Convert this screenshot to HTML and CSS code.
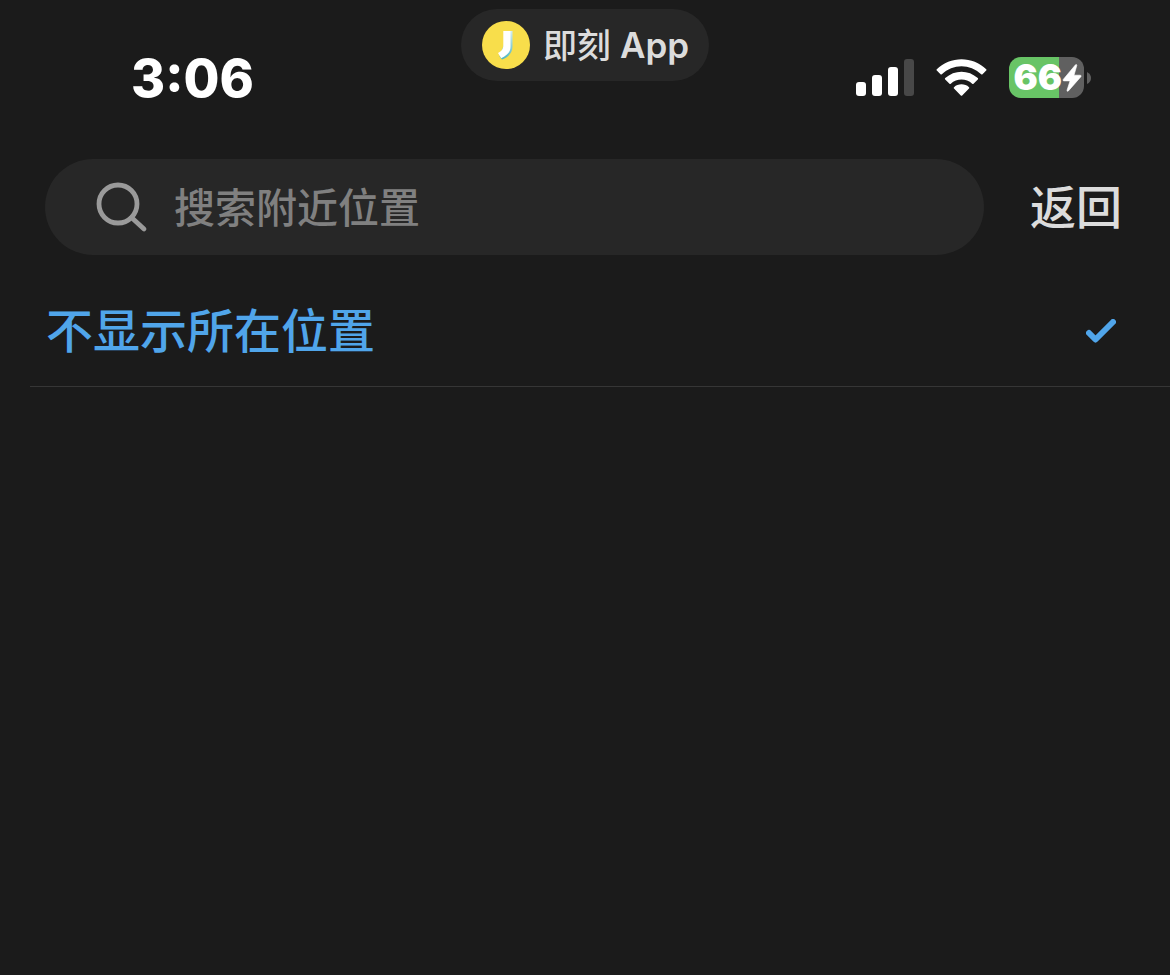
FILE: index.html
```html
<!DOCTYPE html>
<html lang="zh-CN">
<head>
<meta charset="utf-8">
<meta name="viewport" content="width=device-width, initial-scale=1">
<title>搜索附近位置</title>
<link rel="stylesheet" href="styles.css">
</head>
<body>
<header class="status">
  <time class="clock">3:06</time>
  <div class="pill">
    <svg class="pill-logo" viewBox="0 0 48 48" aria-hidden="true">
      <defs>
        <linearGradient id="shade" x1="0" y1="0" x2="0" y2="1">
          <stop offset="0" stop-color="#d3eef0"/>
          <stop offset="1" stop-color="#4fb5c4"/>
        </linearGradient>
      </defs>
      <circle cx="24" cy="24" r="24" fill="#f8de4b"/>
      <path d="M27 10h3.500v15.500c0 6-4 10.500-10.500 13l-2.500-3z" fill="url(#shade)"/>
      <path d="M21.300 10h7.200v16c0 5-3.500 8.500-9.300 11.200l-3.200-5.200c3.800-2 5.300-4 5.300-7.500z" fill="#fff"/>
    </svg>
    <span class="pill-text">即刻 <span class="latin">App</span></span>
  </div>
  <div class="indicators">
    <svg class="signal" viewBox="0 0 58 38" role="img" aria-label="信号">
      <g fill="#fff">
        <rect x="0" y="23" width="10" height="14" rx="3"/>
        <rect x="16" y="16" width="10" height="21" rx="3"/>
        <rect x="32" y="8" width="10" height="29" rx="3"/>
      </g>
      <rect x="48" y="0" width="10" height="37" rx="3" fill="#484848"/>
    </svg>
    <svg class="wifi" viewBox="0 0 51 38" role="img" aria-label="无线网络">
      <g fill="#fff">
        <path d="M.8 10.300C14-3.200 37-3.200 50.200 10.300q.6.700 0 1.300l-3.700 3.700q-.6.600-1.300 0C34 4.600 17 4.600 5.800 15.300q-.7.600-1.300 0L.8 11.600q-.6-.6 0-1.300z"/>
        <path d="M9.200 19.100C18.500 10.500 32.500 10.500 41.800 19.100q.7.600 0 1.300l-4.300 4.300q-.6.600-1.300 0C30.200 19.200 20.800 19.200 14.800 24.700q-.7.600-1.300 0L9.200 20.400q-.7-.7 0-1.300z"/>
        <path d="M18 28.200c4-3.800 11-3.800 15 0q.7.700 0 1.300L26.200 36.500q-.7.700-1.400 0L18 29.500q-.7-.6 0-1.300z"/>
      </g>
    </svg>
    <div class="battery">
      <div class="battery-body">
        <span>66</span>
        <svg class="bolt" viewBox="0 0 20 28" aria-hidden="true">
          <path d="M13.500.8 1.200 15.500q-.8 1.300.8 1.400H8L5 26.300q-.1 1.700 1.400.6L18.900 12.700q.8-1.400-.8-1.500H12L14.800 1.500Q14.800 0 13.500.8z" fill="#fff" stroke="#fff" stroke-width=".6"/>
        </svg>
      </div>
      <svg class="battery-tip" viewBox="0 0 4 12" aria-hidden="true"><path d="M0 0q4 2 4 6t-4 6z" fill="#606060"/></svg>
    </div>
  </div>
</header>
<main>
  <form class="search-row">
    <label class="search">
      <svg class="search-icon" viewBox="0 0 52 52" aria-hidden="true">
        <circle cx="22" cy="22" r="19" fill="none" stroke="#9a9a9a" stroke-width="4.800"/>
        <path d="M35.500 35.500 48 47" fill="none" stroke="#9a9a9a" stroke-width="4.800" stroke-linecap="round"/>
      </svg>
      <input class="search-input" type="text" placeholder="搜索附近位置" aria-label="搜索附近位置">
    </label>
    <button class="back" type="button">返回</button>
  </form>
  <button class="option" type="button" aria-pressed="true">
    <span>不显示所在位置</span>
    <svg class="check" viewBox="0 0 30 24" aria-hidden="true">
      <path d="M3 14l6.500 6.500L27 3" fill="none" stroke="#50a5ea" stroke-width="6" stroke-linecap="round" stroke-linejoin="round"/>
    </svg>
  </button>
</main>
</body>
</html>
```
FILE: styles.css
```css
* {
  box-sizing: border-box;
}

body {
  margin: 0;
  min-height: 100vh;
  background: #1b1b1b;
  color: #dcdcdc;
  font-family: Inter, "Noto Sans CJK SC", sans-serif;
}

svg {
  display: block;
  flex: none;
}

button,
input {
  margin: 0;
  padding: 0;
  border: 0;
  background: none;
  color: inherit;
  font: inherit;
}

.status {
  display: grid;
  grid-template-columns: minmax(0, 1fr) auto minmax(0, 1fr);
  padding: 9px 0 50px;
}

.clock {
  padding: 40px 0 0 131px;
  color: #fff;
  font-size: 52px;
  font-weight: 800;
  line-height: 60px;
}

.pill {
  display: flex;
  align-items: center;
  align-self: start;
  gap: 13px;
  height: 72px;
  padding: 0 20px 0 21px;
  border-radius: 36px;
  background: #272727;
  font-size: 34px;
  font-weight: 500;
  white-space: nowrap;
}

.pill-logo {
  width: 48px;
  height: 48px;
}

.pill-text {
  padding-bottom: 4px;
}

.latin {
  font-size: 35px;
  font-weight: 600;
}

.indicators {
  display: flex;
  align-items: center;
  justify-content: flex-end;
  gap: 22px;
  height: 41px;
  margin-top: 48px;
  padding-right: 79px;
}

.signal {
  width: 58px;
  height: 38px;
}

.wifi {
  width: 51px;
  height: 38px;
}

.battery {
  display: flex;
  align-items: center;
  gap: 3px;
}

.battery-body {
  display: flex;
  align-items: center;
  justify-content: flex-end;
  width: 75px;
  height: 41px;
  padding-right: 2px;
  border-radius: 12px;
  background: linear-gradient(90deg, #68c466 67%, #606060 67%);
  color: #fff;
  font-size: 36px;
  font-weight: 900;
  line-height: 41px;
}

.bolt {
  width: 20px;
  height: 28px;
}

.battery-tip {
  width: 4px;
  height: 12px;
}

.search-row {
  display: flex;
  align-items: center;
  gap: 46px;
  padding: 0 48px 0 45px;
}

.search {
  display: flex;
  flex: 1;
  align-items: center;
  gap: 26px;
  min-width: 0;
  height: 96px;
  padding: 2px 51px 0;
  border-radius: 48px;
  background: #272727;
}

.search-icon {
  width: 52px;
  height: 52px;
}

.search-input {
  flex: 1;
  min-width: 0;
  height: 60px;
  outline: 0;
  font-size: 41px;
  font-weight: 500;
}

.search-input::placeholder {
  color: #808080;
  opacity: 1;
}

.back {
  font-size: 46px;
  font-weight: 500;
  line-height: 60px;
  white-space: nowrap;
}

.option {
  display: flex;
  align-items: center;
  justify-content: space-between;
  width: calc(100% - 30px);
  margin-left: 30px;
  padding: 40px 54px 20px 16px;
  border-bottom: 1px solid #363636;
  color: #50a5ea;
  font-size: 47px;
  font-weight: 500;
  line-height: 71px;
  text-align: left;
}

.check {
  width: 30px;
  height: 24px;
}
```
